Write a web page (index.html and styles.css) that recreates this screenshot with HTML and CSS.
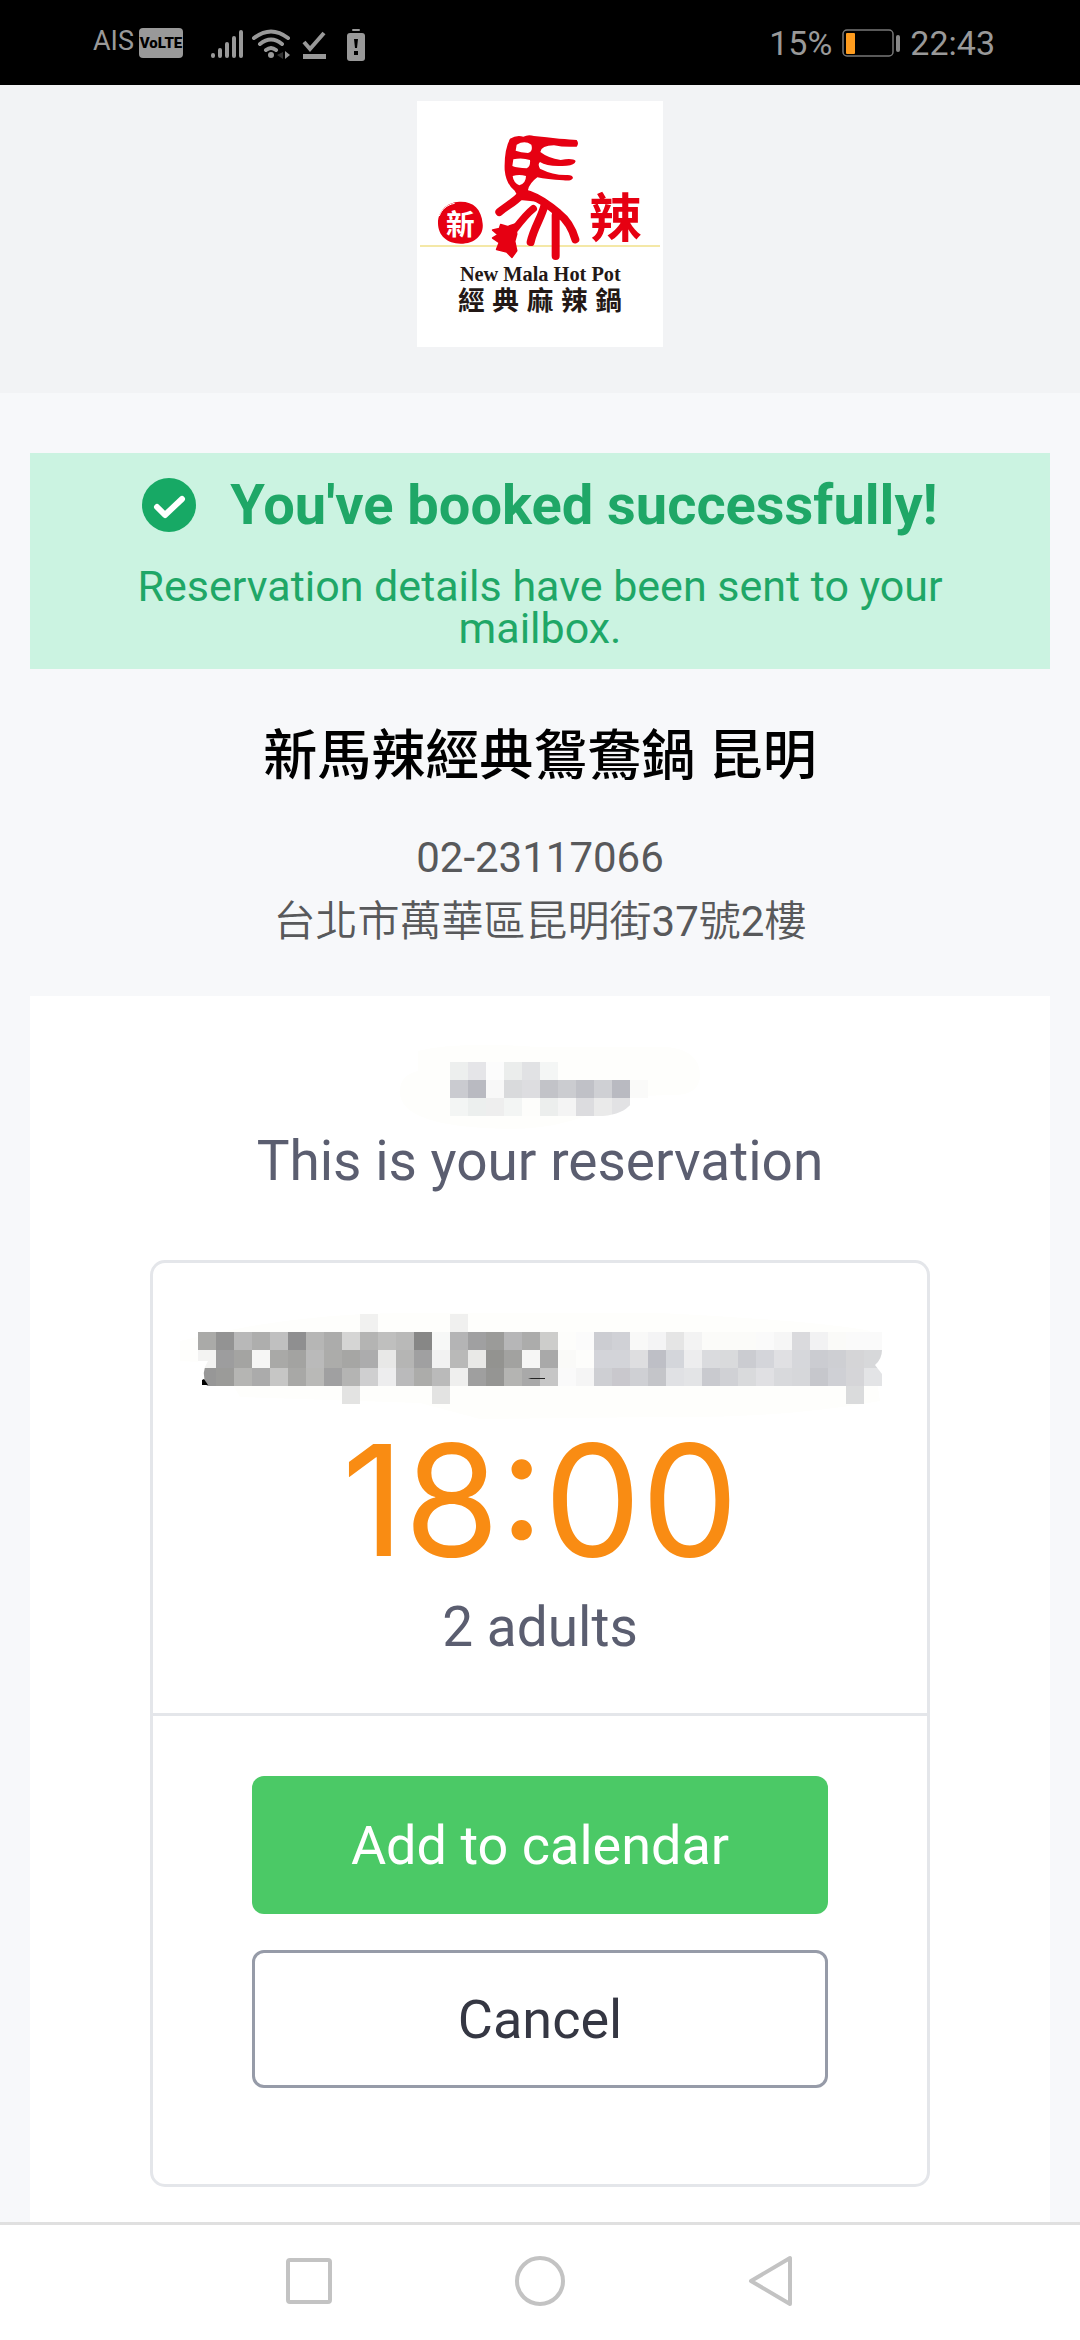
FILE: index.html
```html
<!DOCTYPE html>
<html lang="en">
<head>
<meta charset="utf-8">
<meta name="viewport" content="width=device-width, initial-scale=1">
<title>Reservation</title>
<link rel="stylesheet" href="styles.css">
</head>
<body>
<div class="status">
  <div class="status-left">
    <span class="carrier">AIS</span>
    <span class="volte">VoLTE</span>
    <svg class="status-icons" width="156" height="36" viewBox="0 0 156 36" aria-hidden="true">
      <g fill="none" stroke="#999" stroke-width="4" stroke-linecap="round">
        <path d="M3 30v1M10 25v6M17 19v12M24 13v18M31 7v24"/>
        <path d="M44 13q17-13 34 0M50 19q11-9 22 0M56 25q5-4 10 0"/>
      </g>
      <circle cx="61" cy="30" r="3" fill="#999"/>
      <path d="M73 27l-6 3 6 4z" fill="#333"/>
      <path d="M75 26l5 4-5 4z" fill="#999"/>
      <path d="M94 17l6 7L114 8" fill="none" stroke="#999" stroke-width="4"/>
      <path d="M93 29h23v5H93z" fill="#999"/>
      <rect x="142" y="4" width="8" height="2" rx="1" fill="#999"/>
      <rect x="137" y="8" width="18" height="28" rx="3" fill="#999"/>
      <path d="M144 14h4l-1 9h-2zM144 26h4v4h-4z" fill="#000"/>
    </svg>
  </div>
  <div class="status-right">
    <span>15%</span>
    <svg width="58" height="28" viewBox="0 0 58 28" aria-hidden="true">
      <rect x="1" y="1" width="50" height="26" rx="4" fill="none" stroke="#777" stroke-width="1.5"/>
      <rect x="4" y="4" width="9" height="21" rx="1" fill="#ff9c1e"/>
      <rect x="54" y="6" width="4" height="17" rx="2" fill="#888"/>
    </svg>
    <span>22:43</span>
  </div>
</div>

<header class="brand">
  <svg class="logo" viewBox="51 33 738 738" role="img" aria-label="New Mala Hot Pot">
    <rect x="51" y="33" width="738" height="738" fill="#fff"/>
    <path d="M60 468H780" stroke="#f1e08a" stroke-width="5"/>
    <path d="M178 335c40-2 66 20 70 66 4 34-24 60-66 60-40 0-68-24-68-62 0-36 26-62 64-64z" fill="#e60012"/>
    <path d="M118 378c6-18 22-34 46-38" fill="none" stroke="#fff" stroke-width="3"/>
    <text class="logo-cjk" x="181" y="435" font-size="86" fill="#fff">新</text>
    <text class="logo-cjk" x="645" y="440" font-size="158" fill="#e60012">辣</text>
    <path fill="#e60012" fill-rule="evenodd" d="M330 146Q350 134 370 140Q385 132 402 138Q440 142 478 146Q512 148 530 150Q538 160 530 170Q490 172 462 166Q424 166 421 186Q444 204 482 210Q518 203 527 213Q524 226 500 227Q444 232 420 216Q412 222 420 236Q460 256 500 255Q518 254 519 264Q515 274 490 271Q440 268 412 262Q388 280 384 300Q392 314 424 320L420 336L360 330L344 302Q318 282 314 240Q312 180 330 146ZM350 164Q374 150 394 164Q400 184 384 189Q362 188 347 182ZM340 208Q366 202 390 210Q392 230 380 235Q352 234 337 228ZM338 258Q358 252 378 258Q378 280 358 286Q340 278 338 258Z"/>
    <g fill="none" stroke="#e60012" stroke-linecap="round" stroke-linejoin="round">
      <path stroke-width="24" d="M364 314C340 340 318 348 298 366M388 314c34 12 56 28 88 56 26 20 40 44 50 78M434 344c-8 36-32 68-42 112M467 376v122"/>
      <path stroke-width="22" d="M400 356c-18 14-36 36-56 62"/>
    </g>
    <path d="M302 404l20 6 24-8 4 30-6 22 6 28-14 20-16-16-30-8 8-20-20-14 16-10-16-14 20-4z" fill="#e60012" stroke="#e60012" stroke-width="5" stroke-linejoin="round"/>
    <text class="logo-latin" x="421" y="574" font-size="61">New Mala Hot Pot</text>
    <g class="logo-cjk" font-size="80" fill="#231815">
      <text x="214" y="660">經</text><text x="317" y="660">典</text><text x="420" y="660">麻</text><text x="523" y="660">辣</text><text x="626" y="660">鍋</text>
    </g>
  </svg>
</header>

<main class="page">
  <section class="notice">
    <h1 class="notice-title">
      <svg width="54" height="54" viewBox="0 0 54 54" aria-hidden="true">
        <circle cx="27" cy="27" r="27" fill="#17a965"/>
        <path d="M15 29l8 8 17-16" fill="none" stroke="#fff" stroke-width="6" stroke-linecap="round" stroke-linejoin="round"/>
      </svg>
      You've booked successfully!
    </h1>
    <p class="notice-text">Reservation details have been sent to your mailbox.</p>
  </section>

  <section class="venue">
    <h2 class="venue-name">新馬辣經典鴛鴦鍋 昆明</h2>
    <p class="venue-line">02-23117066</p>
    <p class="venue-line venue-address">台北市萬華區昆明街<span class="digits">37</span>號<span class="digits">2</span>樓</p>
  </section>

  <section class="card">
    <svg class="mosaic" id="name" width="324" height="90" viewBox="0 0 324 90" aria-hidden="true">
      <path d="M40 10Q80 0 160 6L290 6Q322 10 322 34Q322 56 290 54L240 56Q200 88 130 88Q20 86 22 50Q22 34 40 30z" fill="#fefefc"/>
    </svg>
    <p class="lead">This is your reservation</p>
    <div class="ticket">
      <div class="ticket-info">
        <svg class="mosaic" id="date" width="720" height="108" viewBox="0 0 720 108" aria-hidden="true">
          <path d="M0 30Q120 0 240 2H480Q640 10 690 20L700 90Q600 108 480 106L300 108L240 92L60 86L40 52L0 50z" fill="#fefefc"/>
        </svg>
        <p class="time">18:00</p>
        <p class="guests">2 adults</p>
      </div>
      <div class="ticket-actions">
        <button class="btn btn-primary" type="button">Add to calendar</button>
        <button class="btn btn-outline" type="button">Cancel</button>
      </div>
    </div>
  </section>
</main>

<nav class="softkeys">
  <button type="button" aria-label="Recent apps"><svg width="52" height="52" viewBox="0 0 52 52"><rect x="5" y="5" width="42" height="42" rx="2"/></svg></button>
  <button type="button" aria-label="Home"><svg width="52" height="52" viewBox="0 0 52 52"><circle cx="26" cy="26" r="23"/></svg></button>
  <button type="button" aria-label="Back"><svg width="52" height="52" viewBox="0 0 52 52"><path d="M45 3V49L6 26z"/></svg></button>
</nav>
<script src="mosaic.js"></script>
</body>
</html>
```
FILE: mosaic.js
```js
// Pixelated stand-ins for private fields: rows of grey cells, "-" leaves a gap.
const CELL = 18;

function shape(svg, name, attributes) {
  const node = document.createElementNS("http://www.w3.org/2000/svg", name);
  for (const [key, value] of Object.entries(attributes)) node.setAttribute(key, value);
  svg.appendChild(node);
}

function mosaic(id, x, y, rows) {
  const svg = document.getElementById(id);
  rows.forEach((row, r) => row.split(" ").forEach((tone, c) => {
    if (tone === "-") return;
    shape(svg, "rect", { x: x + c * CELL, y: y + r * CELL, width: CELL, height: CELL, fill: "#" + tone });
  }));
  return svg;
}

const name = mosaic("name", 72, 21, [
  "edefee e5e5e8 fcfcfc ebedec e1e2e4 f4f6f5",
  "cacbd0 b9bac1 f8f8f8 d9dadc dddde0 c2c3c8 cbccd0 c0c1c7 cfd0d4 b9bac1 fafaf9",
  "f3f5f4 ecefee eeeeee f3f5f4 fdfdfb eceeed f4f4f4 dcdcdf eaeaea e2e2e4"
]);
shape(name, "path", { d: "M253 63q-8 10-28 12h28z", fill: "#fff" });

const date = mosaic("date", 18, 3, [
  "- - - - - - - - - f1f1f0 - - - - f0f0ef",
  "aaaaa8 939393 b8b8b8 aeaead c0c0c0 8f8f90 b6b6b5 acacab d5d5d4 b4b4b3 bfbfbe b9b9b8 878786 f7f8f7 b4b4b5 a0a0a1 9b9b99 b6b6b7 acacab cdcdcb fdfdfb fbfbfb cccdd2 d0d1d6 f9f9f8 f4f4f5 e5e5e5 f3f3f3 fbfbf9 fbfbf9 fbfbf9 fafafa f6f6f6 dadadd f2f2f3 fafaf8 fafafa fafafa",
  "f3f3f2 9d9d9e a4a4a2 f6f6f5 a9a9a7 a3a3a1 bababa acacaa a6a6a4 acacad e8e8e7 b5b5b4 a0a0a1 f2f2f2 b9b9b8 e9e9e7 939390 a2a2a0 f6f6f5 a9a9a9 fafaf8 fdfdfb d3d4d9 d3d4d9 dedee0 bebfc6 d4d6db ededee dadbde d9dadc cbccd1 d4d5da e0e0e3 d6d7db cbccd1 cecfd3 d5d5d7 d7d8da",
  "979797 9b9b99 b5b5b3 ababab c6c6c5 a8a8a6 b9b9b7 a0a0a1 b4b4b3 cfcfd0 ededee bababb acacaa bababa efefee 9f9f9f 959593 b4b4b2 a9a9a9 c6c6c6 fafafa f5f5f5 cecfd3 c9c8cd cfd0d4 c4c5c9 e0e1e4 e3e4e6 c9cacf d0d1d5 d9dadc e0e0e3 d8d9dc d6d7da c6c7cc cfd0d5 d5d5d8 e3e4e6",
  "- - - - - - - - e3e3e2 - - - - e3e3e2 - - - - - - - - - - - - - - - - - - - - - - dadbdc"
]);
shape(date, "path", { d: "M18 50h10q-8 12-1 25h-9z", fill: "#fff" });
shape(date, "path", { d: "M22 69l2-1 4 6h-6z", fill: "#000" });
shape(date, "path", { d: "M702 39v24l-7-9q7-6 7-15z", fill: "#fff" });
shape(date, "path", { d: "M348 67h17v1h-14z", fill: "#222" });
```
FILE: styles.css
```css
* { box-sizing: border-box; }

body {
  margin: 0;
  min-height: 100vh;
  display: flex;
  flex-direction: column;
  background: #f7f8fa;
  font-family: Roboto, "Noto Sans CJK TC", sans-serif;
  text-align: center;
}

h1, h2, p { margin: 0; }
svg { display: block; flex: none; }

.status {
  height: 85px;
  padding: 0 85px 0 93px;
  display: flex;
  align-items: center;
  justify-content: space-between;
  background: #000;
  color: #999;
}
.status-left, .status-right { display: flex; align-items: center; }
.status-left { gap: 5px; }
.status-right { gap: 10px; font-size: 34px; }
.carrier { padding-bottom: 4px; font-size: 27px; }
.volte {
  width: 44px;
  height: 30px;
  border-radius: 4px;
  background: #999;
  color: #000;
  font-size: 15px;
  font-weight: 900;
  line-height: 30px;
}
.status-icons { margin-left: 22px; }

.brand {
  display: flex;
  justify-content: center;
  padding: 16px 0 46px;
  background: #f2f3f5;
}
.logo { width: 246px; height: 246px; }
.logo text { text-anchor: middle; }
.logo-cjk, .logo-latin {
  font-family: "Liberation Serif", "Noto Sans CJK TC", serif;
  font-weight: 700;
}
.logo-latin { fill: #231815; }

.page {
  flex: 1;
  display: flex;
  flex-direction: column;
  padding: 60px 30px 0;
}

.notice {
  padding: 16px 96px 20px;
  background: #cbf3e1;
  color: #1fa767;
}
.notice-title {
  display: flex;
  justify-content: center;
  align-items: center;
  gap: 34px;
  font-size: 56px;
  font-weight: 700;
  line-height: 72px;
}
.notice-text {
  margin-top: 24px;
  font-size: 43px;
  line-height: 42px;
}

.venue { padding: 54px 0 42px; color: #58595b; }
.venue-name {
  margin-bottom: 35px;
  color: #000;
  font-size: 54px;
  font-weight: 500;
  line-height: 68px;
}
.venue-line { font-size: 42px; line-height: 64px; }
.venue-address { font-weight: 350; }
.digits { font-weight: 400; }

.card {
  flex: 1;
  display: flex;
  flex-direction: column;
  align-items: center;
  padding: 45px 120px 35px;
  background: #fff;
  color: #5b5e70;
}
.lead { font-size: 55px; line-height: 60px; }
.ticket {
  align-self: stretch;
  margin-top: 69px;
  border: 3px solid #e4e6ea;
  border-radius: 15px;
}
.ticket-info {
  display: flex;
  flex-direction: column;
  align-items: center;
  padding: 48px 0 56px;
  border-bottom: 3px solid #e4e6ea;
}
.time {
  color: #f98c13;
  font-family: Inter, Roboto, sans-serif;
  font-size: 154px;
  line-height: 162px;
}
.guests { margin-top: 16px; font-size: 55px; line-height: 60px; }
.ticket-actions {
  display: flex;
  flex-direction: column;
  gap: 36px;
  padding: 60px 99px 96px;
}
.btn {
  height: 138px;
  border: 0;
  border-radius: 12px;
  font-family: inherit;
  font-size: 54px;
}
.btn-primary { background: #4bc966; color: #fff; }
.btn-outline { background: #fff; border: 3px solid #969ba8; color: #353743; }

.softkeys {
  height: 118px;
  padding-bottom: 3px;
  display: flex;
  justify-content: center;
  align-items: center;
  gap: 179px;
  border-top: 3px solid #e0e0e0;
  background: #fff;
}
.softkeys button { padding: 0; border: 0; background: none; }
.softkeys svg { fill: none; stroke: #c3c3c3; stroke-width: 4; stroke-linejoin: round; }
```
